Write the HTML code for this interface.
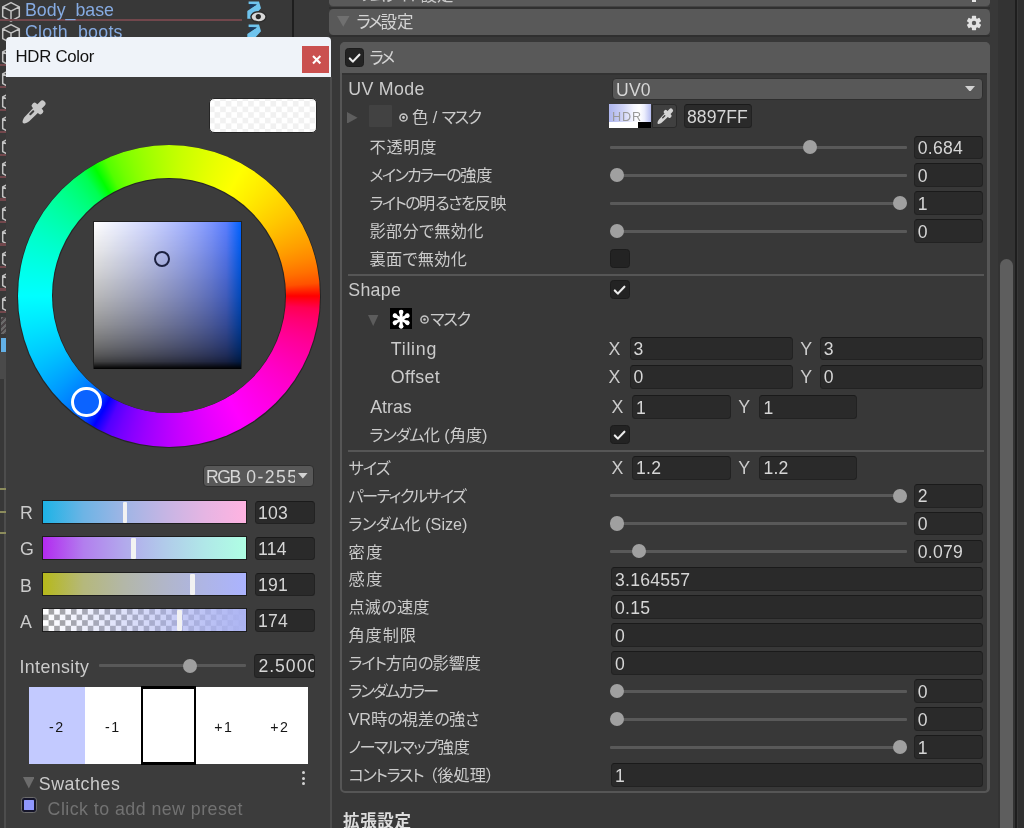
<!DOCTYPE html>
<html lang="ja"><head><meta charset="utf-8"><title>HDR Color</title>
<style>
html,body{margin:0;padding:0;}
body{width:1024px;height:828px;overflow:hidden;background:#383838;position:relative;
 font-family:"Liberation Sans","Noto Sans CJK JP",sans-serif;font-size:17px;color:#d0d0d0;}
#root{position:absolute;left:0;top:0;width:1024px;height:828px;overflow:hidden;background:#383838;will-change:transform;}
#root div,#root span,#root svg.a{position:absolute;box-sizing:border-box;}
.t{white-space:nowrap;display:block;}
#root .t span{position:static;}
.lb{color:#cbcbcb;font-size:17.8px;}
.jp{color:#cbcbcb;font-size:16.2px;font-feature-settings:"palt";}
.v{color:#d6d6d6;font-size:17.6px;margin-top:0.6px;letter-spacing:0.25px;}
.f{background:#2a2a2a;border:1px solid #222;border-top-color:#1a1a1a;border-radius:3.5px;}
.trk{background:#595959;border-radius:1px;}
.knob{background:#a0a0a0;border-radius:50%;}
.cb{background:#232323;border:1px solid #1c1c1c;border-radius:3.5px;}
.hd{background:#595959;border-radius:4.5px;}
.sep{background:#565656;}
.dd{background:#585858;border:1px solid #2e2e2e;border-radius:4px;}
.bar{border:1.5px solid #1d1d1d;}
.h{background:#f2f2f2;border-radius:1px;}
</style></head><body><div id="root">

<svg class="a" style="left:0.5px;top:1.0px" width="20" height="21" viewBox="0 0 20 21"><path d="M10 1.6 L18.3 5.8 V15.6 L10 20 L1.7 15.6 V5.8 Z M1.7 5.8 L10 10.2 L18.3 5.8 M10 10.2 V20" fill="none" stroke="#c4c4c4" stroke-width="1.5" stroke-linejoin="round"/></svg>
<div class="" style="left:0px;top:18.8px;width:241.5px;height:2.4px;background:#72474c;"></div>
<svg class="a" style="left:0.5px;top:23.4px" width="20" height="21" viewBox="0 0 20 21"><path d="M10 1.6 L18.3 5.8 V15.6 L10 20 L1.7 15.6 V5.8 Z M1.7 5.8 L10 10.2 L18.3 5.8 M10 10.2 V20" fill="none" stroke="#c4c4c4" stroke-width="1.5" stroke-linejoin="round"/></svg>
<svg class="a" style="left:0.5px;top:45.9px" width="20" height="21" viewBox="0 0 20 21"><path d="M10 1.6 L18.3 5.8 V15.6 L10 20 L1.7 15.6 V5.8 Z M1.7 5.8 L10 10.2 L18.3 5.8 M10 10.2 V20" fill="none" stroke="#c4c4c4" stroke-width="1.5" stroke-linejoin="round"/></svg>
<div class="" style="left:0px;top:63.7px;width:241.5px;height:2.4px;background:#72474c;"></div>
<svg class="a" style="left:0.5px;top:68.3px" width="20" height="21" viewBox="0 0 20 21"><path d="M10 1.6 L18.3 5.8 V15.6 L10 20 L1.7 15.6 V5.8 Z M1.7 5.8 L10 10.2 L18.3 5.8 M10 10.2 V20" fill="none" stroke="#c4c4c4" stroke-width="1.5" stroke-linejoin="round"/></svg>
<div class="" style="left:0px;top:86.1px;width:241.5px;height:2.4px;background:#72474c;"></div>
<svg class="a" style="left:0.5px;top:90.8px" width="20" height="21" viewBox="0 0 20 21"><path d="M10 1.6 L18.3 5.8 V15.6 L10 20 L1.7 15.6 V5.8 Z M1.7 5.8 L10 10.2 L18.3 5.8 M10 10.2 V20" fill="none" stroke="#c4c4c4" stroke-width="1.5" stroke-linejoin="round"/></svg>
<div class="" style="left:0px;top:108.6px;width:241.5px;height:2.4px;background:#72474c;"></div>
<svg class="a" style="left:0.5px;top:113.2px" width="20" height="21" viewBox="0 0 20 21"><path d="M10 1.6 L18.3 5.8 V15.6 L10 20 L1.7 15.6 V5.8 Z M1.7 5.8 L10 10.2 L18.3 5.8 M10 10.2 V20" fill="none" stroke="#c4c4c4" stroke-width="1.5" stroke-linejoin="round"/></svg>
<div class="" style="left:0px;top:131.1px;width:241.5px;height:2.3px;background:#72474c;"></div>
<svg class="a" style="left:0.5px;top:135.7px" width="20" height="21" viewBox="0 0 20 21"><path d="M10 1.6 L18.3 5.8 V15.6 L10 20 L1.7 15.6 V5.8 Z M1.7 5.8 L10 10.2 L18.3 5.8 M10 10.2 V20" fill="none" stroke="#c4c4c4" stroke-width="1.5" stroke-linejoin="round"/></svg>
<div class="" style="left:0px;top:153.5px;width:241.5px;height:2.4px;background:#72474c;"></div>
<svg class="a" style="left:0.5px;top:158.2px" width="20" height="21" viewBox="0 0 20 21"><path d="M10 1.6 L18.3 5.8 V15.6 L10 20 L1.7 15.6 V5.8 Z M1.7 5.8 L10 10.2 L18.3 5.8 M10 10.2 V20" fill="none" stroke="#c4c4c4" stroke-width="1.5" stroke-linejoin="round"/></svg>
<div class="" style="left:0px;top:176.0px;width:241.5px;height:2.3px;background:#72474c;"></div>
<svg class="a" style="left:0.5px;top:180.6px" width="20" height="21" viewBox="0 0 20 21"><path d="M10 1.6 L18.3 5.8 V15.6 L10 20 L1.7 15.6 V5.8 Z M1.7 5.8 L10 10.2 L18.3 5.8 M10 10.2 V20" fill="none" stroke="#c4c4c4" stroke-width="1.5" stroke-linejoin="round"/></svg>
<div class="" style="left:0px;top:198.4px;width:241.5px;height:2.4px;background:#72474c;"></div>
<svg class="a" style="left:0.5px;top:203.0px" width="20" height="21" viewBox="0 0 20 21"><path d="M10 1.6 L18.3 5.8 V15.6 L10 20 L1.7 15.6 V5.8 Z M1.7 5.8 L10 10.2 L18.3 5.8 M10 10.2 V20" fill="none" stroke="#c4c4c4" stroke-width="1.5" stroke-linejoin="round"/></svg>
<div class="" style="left:0px;top:220.8px;width:241.5px;height:2.4px;background:#72474c;"></div>
<svg class="a" style="left:0.5px;top:225.5px" width="20" height="21" viewBox="0 0 20 21"><path d="M10 1.6 L18.3 5.8 V15.6 L10 20 L1.7 15.6 V5.8 Z M1.7 5.8 L10 10.2 L18.3 5.8 M10 10.2 V20" fill="none" stroke="#c4c4c4" stroke-width="1.5" stroke-linejoin="round"/></svg>
<div class="" style="left:0px;top:243.3px;width:241.5px;height:2.4px;background:#72474c;"></div>
<svg class="a" style="left:0.5px;top:247.9px" width="20" height="21" viewBox="0 0 20 21"><path d="M10 1.6 L18.3 5.8 V15.6 L10 20 L1.7 15.6 V5.8 Z M1.7 5.8 L10 10.2 L18.3 5.8 M10 10.2 V20" fill="none" stroke="#c4c4c4" stroke-width="1.5" stroke-linejoin="round"/></svg>
<div class="" style="left:0px;top:265.8px;width:241.5px;height:2.3px;background:#72474c;"></div>
<svg class="a" style="left:0.5px;top:270.4px" width="20" height="21" viewBox="0 0 20 21"><path d="M10 1.6 L18.3 5.8 V15.6 L10 20 L1.7 15.6 V5.8 Z M1.7 5.8 L10 10.2 L18.3 5.8 M10 10.2 V20" fill="none" stroke="#c4c4c4" stroke-width="1.5" stroke-linejoin="round"/></svg>
<div class="" style="left:0px;top:288.2px;width:241.5px;height:2.4px;background:#72474c;"></div>
<svg class="a" style="left:0.5px;top:292.8px" width="20" height="21" viewBox="0 0 20 21"><path d="M10 1.6 L18.3 5.8 V15.6 L10 20 L1.7 15.6 V5.8 Z M1.7 5.8 L10 10.2 L18.3 5.8 M10 10.2 V20" fill="none" stroke="#c4c4c4" stroke-width="1.5" stroke-linejoin="round"/></svg>
<div class="" style="left:0px;top:310.6px;width:241.5px;height:2.4px;background:#72474c;"></div>
<span id="t1" class="t lb" style="left:25px;top:-4.4px;height:28px;line-height:28px;color:#86abe2;">Body_base</span>
<span id="t2" class="t lb" style="left:25px;top:18.1px;height:28px;line-height:28px;letter-spacing:0.26px;color:#86abe2;">Cloth_boots</span>
<svg class="a" style="left:232px;top:0px" width="32" height="20" viewBox="0 0 32 20"><path d="M16.6 1.4 H27 L29 8.2 L19.5 18.7 H15.3 V11 L24.6 4.6 L16.6 4 Z" fill="#6fc4ee"/><path d="M17.9 3.9 L25 4.5 L17.9 8.6 Z" fill="#173a63"/></svg>
<svg class="a" style="left:232px;top:22.5px" width="32" height="20" viewBox="0 0 32 20"><path d="M16.6 1.4 H27 L29 8.2 L19.5 18.7 H15.3 V11 L24.6 4.6 L16.6 4 Z" fill="#6fc4ee"/><path d="M17.9 3.9 L25 4.5 L17.9 8.6 Z" fill="#173a63"/></svg>
<svg class="a" style="left:249px;top:10px" width="19" height="14" viewBox="0 0 19 14"><ellipse cx="9.5" cy="6.8" rx="8.3" ry="5.8" fill="#2c2c2c"/><ellipse cx="9.5" cy="6.8" rx="6.8" ry="4.4" fill="#d8d8d8"/><circle cx="9.3" cy="6.6" r="2.6" fill="#2a2a2a"/></svg>
<div class="" style="left:1px;top:317px;width:4.5px;height:17.0px;background:repeating-linear-gradient(135deg,#6a6a6a 0 2px,#4a4446 2px 4px);"></div>
<div class="" style="left:0.5px;top:338px;width:5.5px;height:14.0px;background:#62b0e6;"></div>
<div class="" style="left:0px;top:352px;width:6.0px;height:27.0px;background:#4a4a4a;"></div>
<div class="" style="left:4px;top:379px;width:1.5px;height:449.0px;background:#4d4d4d;"></div>
<div class="" style="left:0px;top:487.6px;width:5.5px;height:2.0px;background:#8c8c5c;"></div>
<div class="" style="left:0px;top:510.6px;width:5.5px;height:2.0px;background:#8c8c5c;"></div>
<div class="" style="left:0px;top:532.3px;width:5.5px;height:2.0px;background:#8c8c5c;"></div>
<div class="" style="left:292px;top:0px;width:2.3px;height:828.0px;background:#1e1e1e;"></div>
<div class="" style="left:997.7px;top:0px;width:17.6px;height:828.0px;background:#333;"></div>
<div class="" style="left:1015.3px;top:0px;width:2.2px;height:828.0px;background:#1e1e1e;"></div>
<div class="" style="left:1017.5px;top:0px;width:6.5px;height:828.0px;background:#2f2f2f;"></div>
<div class="" style="left:1000px;top:259.2px;width:13.0px;height:590.8px;background:#5e5e5e;border-radius:6.5px;"></div>
<div class="hd" style="left:329px;top:-20px;width:660.5px;height:27.2px;border-bottom:1px solid #444;"></div>
<span id="t3" class="t jp" style="left:358px;top:-18.9px;height:28px;line-height:28px;font-size:16.5px;"><span class="k" style="letter-spacing:-1.43px">リムライト</span>設定</span>
<div class="" style="left:972px;top:-2px;width:4.0px;height:4.4px;background:#e6e6e6;"></div>
<div class="" style="left:329px;top:7.2px;width:660.5px;height:1.8px;background:#303030;"></div>
<div class="hd" style="left:329px;top:9px;width:660.5px;height:26.0px;"></div>
<div class="" style="left:329px;top:35px;width:660.5px;height:2.0px;background:#2f2f2f;border-radius:0 0 3px 3px;"></div>
<svg class="a" style="left:337px;top:16.3px" width="12.5" height="10.7" viewBox="0 0 12.5 10.7"><path d="M0 0 H12.5 L6.25 10.7 Z" fill="#707070"/></svg>
<span id="t4" class="t jp" style="left:356.5px;top:7.6px;height:28px;line-height:28px;font-size:16.5px;color:#d4d4d4;"><span class="k" style="letter-spacing:-2.10px">ラメ</span>設定</span>
<svg class="a" style="left:965.8px;top:14.9px" width="16" height="16" viewBox="-8 -8 16 16"><g fill="#e2e2e2"><rect x="-2.1" y="-7.2" width="4.2" height="4" rx="0.6" transform="rotate(0)" /><rect x="-2.1" y="-7.2" width="4.2" height="4" rx="0.6" transform="rotate(60)" /><rect x="-2.1" y="-7.2" width="4.2" height="4" rx="0.6" transform="rotate(120)" /><rect x="-2.1" y="-7.2" width="4.2" height="4" rx="0.6" transform="rotate(180)" /><rect x="-2.1" y="-7.2" width="4.2" height="4" rx="0.6" transform="rotate(240)" /><rect x="-2.1" y="-7.2" width="4.2" height="4" rx="0.6" transform="rotate(300)" /><circle r="5.3"/></g><circle r="2.2" fill="#595959"/></svg>
<div class="" style="left:340px;top:42px;width:649.7px;height:750.7px;border:2px solid #565656;border-right-width:3px;border-radius:5px;background:#383838;"></div>
<div class="" style="left:342px;top:73px;width:644.7px;height:2.4px;background:#323232;"></div>
<div class="" style="left:340px;top:42px;width:649.7px;height:31.2px;background:#595959;border-radius:5px 5px 0 0;"></div>
<div class="cb" style="left:344.7px;top:47.9px;width:19.3px;height:19.3px;"><svg width="100%" height="100%" viewBox="0 0 20 20"><path d="M4.4 10.9 L7.9 14.6 L15.5 6.6" fill="none" stroke="#ececec" stroke-width="2.5" stroke-linecap="round" stroke-linejoin="round"/></svg></div>
<span id="t5" class="t jp" style="left:369.5px;top:43.8px;height:28px;line-height:28px;font-size:16.5px;color:#d4d4d4;"><span class="k" style="letter-spacing:-2.60px">ラメ</span></span>
<span id="t6" class="t lb" style="left:348.3px;top:74.9px;height:28px;line-height:28px;letter-spacing:0.31px;">UV Mode</span>
<div class="dd" style="left:612px;top:78px;width:371.0px;height:21.6px;"></div>
<span id="t7" class="t v" style="left:616px;top:75.0px;height:28px;line-height:28px;letter-spacing:0.20px;">UV0</span>
<svg class="a" style="left:964.5px;top:85.6px" width="10" height="5.8" viewBox="0 0 10 5.8"><path d="M0 0 H10 L5 5.8 Z" fill="#d2d2d2"/></svg>
<svg class="a" style="left:347px;top:111.8px" width="10.6" height="11.6" viewBox="0 0 10.6 11.6"><path d="M0 0 V11.6 L10.6 5.8 Z" fill="#5e5e5e"/></svg>
<div class="" style="left:369px;top:104.8px;width:22.6px;height:22.6px;background:#424242;border-radius:1px;"></div>
<svg class="a" style="left:399px;top:112.5px" width="9" height="9" viewBox="0 0 9 9"><circle cx="4.5" cy="4.5" r="3.6" fill="none" stroke="#c8c8c8" stroke-width="1.5"/><circle cx="4.5" cy="4.5" r="1.4" fill="#c8c8c8"/></svg>
<span id="t8" class="t jp" style="left:412px;top:103.2px;height:28px;line-height:28px;">色 / <span class="k" style="letter-spacing:-1.59px">マスク</span></span>
<div class="" style="left:608.6px;top:104.4px;width:42.2px;height:23.6px;background:linear-gradient(to right,#aeb6ee 0,#b9c0f1 12%,#d2d6f8 35%,#f4f5ff 58%,#ffffff 72%,#eceefd 84%,#b4bbf0 100%);"></div>
<div class="" style="left:608.6px;top:122.3px;width:29.4px;height:5.7px;background:#fff;"></div>
<div class="" style="left:638px;top:122.3px;width:12.8px;height:5.7px;background:#000;"></div>
<span id="t9" class="t v" style="left:612px;top:102.8px;height:28px;line-height:28px;letter-spacing:0.85px;color:#9a9a9a;font-size:12.6px;">HDR</span>
<div class="" style="left:651.6px;top:104.4px;width:25.0px;height:23.6px;background:#404040;border:1px solid #2a2a2a;border-radius:0 3px 3px 0;"></div>
<svg class="a" style="left:652.8px;top:104.2px" width="24.5" height="24.5" viewBox="-18 -18 36 36"><g transform="rotate(45)"><g fill="#d4d4d4"><rect x="-3.1" y="-14.9" width="6.2" height="11" rx="3"/><rect x="-6.8" y="-7.7" width="13.6" height="5.6" rx="2.2"/><path d="M-3.5 -3 H3.5 L3.1 9.5 C3 12.4 1.5 15.6 0 15.6 C-1.5 15.6 -3 12.4 -3.1 9.5 Z"/></g><rect x="-2.1" y="-1" width="2.1" height="6.2" rx="1" fill="#404040"/></g></svg>
<div class="f" style="left:683.5px;top:104.4px;width:68.3px;height:23.6px;"></div>
<span id="t10" class="t v" style="left:687px;top:102.4px;height:28px;line-height:28px;letter-spacing:0.04px;">8897FF</span>
<span id="t11" class="t jp" style="left:369.5px;top:133.4px;height:28px;line-height:28px;letter-spacing:0.75px;">不透明度</span>
<div class="trk" style="left:610px;top:146px;width:296.7px;height:3.0px;"></div>
<div class="knob" style="left:803.3px;top:140.20000000000002px;width:14.2px;height:14.2px;"></div>
<div class="f" style="left:913.8px;top:135.5px;width:69.0px;height:23.8px;"></div>
<span id="t12" class="t v" style="left:917.8px;top:133.4px;height:28px;line-height:28px;">0.684</span>
<span id="t13" class="t jp" style="left:369.5px;top:161.2px;height:28px;line-height:28px;"><span class="k" style="letter-spacing:-1.81px">メインカラーの</span>強度</span>
<div class="trk" style="left:610px;top:174px;width:296.7px;height:3.0px;"></div>
<div class="knob" style="left:610.3px;top:168.0px;width:14.2px;height:14.2px;"></div>
<div class="f" style="left:913.8px;top:163.29999999999998px;width:69.0px;height:23.8px;"></div>
<span id="t14" class="t v" style="left:917.8px;top:161.2px;height:28px;line-height:28px;">0</span>
<span id="t15" class="t jp" style="left:369.5px;top:189.1px;height:28px;line-height:28px;"><span class="k" style="letter-spacing:-1.68px">ライトの</span>明<span class="k" style="letter-spacing:-1.68px">るさを</span>反映</span>
<div class="trk" style="left:610px;top:202px;width:296.7px;height:3.0px;"></div>
<div class="knob" style="left:892.6px;top:195.9px;width:14.2px;height:14.2px;"></div>
<div class="f" style="left:913.8px;top:191.2px;width:69.0px;height:23.8px;"></div>
<span id="t16" class="t v" style="left:917.8px;top:189.1px;height:28px;line-height:28px;">1</span>
<span id="t17" class="t jp" style="left:369.5px;top:217.0px;height:28px;line-height:28px;letter-spacing:0.32px;">影部分で無効化</span>
<div class="trk" style="left:610px;top:230px;width:296.7px;height:3.0px;"></div>
<div class="knob" style="left:610.3px;top:223.8px;width:14.2px;height:14.2px;"></div>
<div class="f" style="left:913.8px;top:219.1px;width:69.0px;height:23.8px;"></div>
<span id="t18" class="t v" style="left:917.8px;top:217.0px;height:28px;line-height:28px;">0</span>
<span id="t19" class="t jp" style="left:369.5px;top:244.9px;height:28px;line-height:28px;letter-spacing:0.32px;">裏面で無効化</span>
<div class="cb" style="left:610.4px;top:249.0px;width:19.3px;height:19.3px;"></div>
<div class="sep" style="left:347.5px;top:274.2px;width:636.5px;height:1.9px;"></div>
<span id="t20" class="t lb" style="left:348.3px;top:276.2px;height:28px;line-height:28px;letter-spacing:0.27px;">Shape</span>
<div class="cb" style="left:610.4px;top:280.0px;width:19.3px;height:19.3px;"><svg width="100%" height="100%" viewBox="0 0 20 20"><path d="M4.4 10.9 L7.9 14.6 L15.5 6.6" fill="none" stroke="#ececec" stroke-width="2.5" stroke-linecap="round" stroke-linejoin="round"/></svg></div>
<svg class="a" style="left:368.2px;top:314.7px" width="10.4" height="11" viewBox="0 0 10.4 11"><path d="M0 0 H10.4 L5.2 11 Z" fill="#5c5c5c"/></svg>
<svg class="a" style="left:389.9px;top:307.6px" width="22.3" height="21.8" viewBox="-11.15 -10.9 22.3 21.8"><rect x="-11.15" y="-10.9" width="22.3" height="21.8" fill="#000"/><g transform="translate(0,0.3)"><g transform="rotate(0)"><line x1="0" y1="0" x2="0" y2="-7.6" stroke="#fff" stroke-width="3" stroke-linecap="round"/><circle cx="0" cy="-7.1" r="2.35" fill="#fff"/></g><g transform="rotate(60)"><line x1="0" y1="0" x2="0" y2="-7.6" stroke="#fff" stroke-width="3" stroke-linecap="round"/><circle cx="0" cy="-7.1" r="2.35" fill="#fff"/></g><g transform="rotate(120)"><line x1="0" y1="0" x2="0" y2="-7.6" stroke="#fff" stroke-width="3" stroke-linecap="round"/><circle cx="0" cy="-7.1" r="2.35" fill="#fff"/></g><g transform="rotate(180)"><line x1="0" y1="0" x2="0" y2="-7.6" stroke="#fff" stroke-width="3" stroke-linecap="round"/><circle cx="0" cy="-7.1" r="2.35" fill="#fff"/></g><g transform="rotate(240)"><line x1="0" y1="0" x2="0" y2="-7.6" stroke="#fff" stroke-width="3" stroke-linecap="round"/><circle cx="0" cy="-7.1" r="2.35" fill="#fff"/></g><g transform="rotate(300)"><line x1="0" y1="0" x2="0" y2="-7.6" stroke="#fff" stroke-width="3" stroke-linecap="round"/><circle cx="0" cy="-7.1" r="2.35" fill="#fff"/></g></g></svg>
<svg class="a" style="left:420px;top:314.5px" width="9" height="9" viewBox="0 0 9 9"><circle cx="4.5" cy="4.5" r="3.6" fill="none" stroke="#c4c4c4" stroke-width="1.5"/><circle cx="4.5" cy="4.5" r="1.3" fill="#c4c4c4"/></svg>
<span id="t21" class="t jp" style="left:430.2px;top:305.3px;height:28px;line-height:28px;"><span class="k" style="letter-spacing:-1.36px">マスク</span></span>
<span id="t22" class="t lb" style="left:390.8px;top:334.5px;height:28px;line-height:28px;letter-spacing:0.73px;">Tiling</span>
<span id="t23" class="t lb" style="left:608.5px;top:334.5px;height:28px;line-height:28px;">X</span>
<div class="f" style="left:629.5px;top:336.6px;width:163.0px;height:23.8px;"></div>
<span id="t24" class="t v" style="left:633.5px;top:334.5px;height:28px;line-height:28px;">3</span>
<span id="t25" class="t lb" style="left:800.3px;top:334.5px;height:28px;line-height:28px;">Y</span>
<div class="f" style="left:819.8px;top:336.6px;width:162.8px;height:23.8px;"></div>
<span id="t26" class="t v" style="left:823.8px;top:334.5px;height:28px;line-height:28px;">3</span>
<span id="t27" class="t lb" style="left:390.8px;top:362.8px;height:28px;line-height:28px;letter-spacing:0.38px;">Offset</span>
<span id="t28" class="t lb" style="left:608.5px;top:362.8px;height:28px;line-height:28px;">X</span>
<div class="f" style="left:629.5px;top:364.90000000000003px;width:163.0px;height:23.8px;"></div>
<span id="t29" class="t v" style="left:633.5px;top:362.8px;height:28px;line-height:28px;">0</span>
<span id="t30" class="t lb" style="left:800.3px;top:362.8px;height:28px;line-height:28px;">Y</span>
<div class="f" style="left:819.8px;top:364.90000000000003px;width:162.8px;height:23.8px;"></div>
<span id="t31" class="t v" style="left:823.8px;top:362.8px;height:28px;line-height:28px;">0</span>
<span id="t32" class="t lb" style="left:370.2px;top:393.0px;height:28px;line-height:28px;">Atras</span>
<span id="t33" class="t lb" style="left:611.4px;top:393.0px;height:28px;line-height:28px;">X</span>
<div class="f" style="left:632px;top:395.1px;width:98.5px;height:23.8px;"></div>
<span id="t34" class="t v" style="left:636px;top:393.0px;height:28px;line-height:28px;">1</span>
<span id="t35" class="t lb" style="left:738.3px;top:393.0px;height:28px;line-height:28px;">Y</span>
<div class="f" style="left:759.4px;top:395.1px;width:97.4px;height:23.8px;"></div>
<span id="t36" class="t v" style="left:763.4px;top:393.0px;height:28px;line-height:28px;">1</span>
<span id="t37" class="t jp" style="left:369.5px;top:421.4px;height:28px;line-height:28px;"><span class="k" style="letter-spacing:-1.05px">ランダム</span>化 (角度)</span>
<div class="cb" style="left:610.4px;top:425.2px;width:19.3px;height:19.3px;"><svg width="100%" height="100%" viewBox="0 0 20 20"><path d="M4.4 10.9 L7.9 14.6 L15.5 6.6" fill="none" stroke="#ececec" stroke-width="2.5" stroke-linecap="round" stroke-linejoin="round"/></svg></div>
<div class="sep" style="left:347.5px;top:450.4px;width:636.5px;height:2.0px;"></div>
<span id="t38" class="t jp" style="left:348.5px;top:453.7px;height:28px;line-height:28px;"><span class="k" style="letter-spacing:-0.84px">サイズ</span></span>
<span id="t39" class="t lb" style="left:611.4px;top:453.7px;height:28px;line-height:28px;">X</span>
<div class="f" style="left:632px;top:455.8px;width:98.5px;height:23.8px;"></div>
<span id="t40" class="t v" style="left:636px;top:453.7px;height:28px;line-height:28px;">1.2</span>
<span id="t41" class="t lb" style="left:738.3px;top:453.7px;height:28px;line-height:28px;">Y</span>
<div class="f" style="left:759.4px;top:455.8px;width:97.4px;height:23.8px;"></div>
<span id="t42" class="t v" style="left:763.4px;top:453.7px;height:28px;line-height:28px;">1.2</span>
<span id="t43" class="t jp" style="left:348.5px;top:481.7px;height:28px;line-height:28px;"><span class="k" style="letter-spacing:-1.51px">パーティクルサイズ</span></span>
<div class="trk" style="left:610px;top:494px;width:296.7px;height:3.0px;"></div>
<div class="knob" style="left:892.6px;top:488.5px;width:14.2px;height:14.2px;"></div>
<div class="f" style="left:913.8px;top:483.8px;width:69.0px;height:23.8px;"></div>
<span id="t44" class="t v" style="left:917.8px;top:481.7px;height:28px;line-height:28px;">2</span>
<span id="t45" class="t jp" style="left:348.5px;top:509.6px;height:28px;line-height:28px;"><span class="k" style="letter-spacing:-0.58px">ランダム</span>化 (Size)</span>
<div class="trk" style="left:610px;top:522px;width:296.7px;height:3.0px;"></div>
<div class="knob" style="left:610.3px;top:516.4px;width:14.2px;height:14.2px;"></div>
<div class="f" style="left:913.8px;top:511.70000000000005px;width:69.0px;height:23.8px;"></div>
<span id="t46" class="t v" style="left:917.8px;top:509.6px;height:28px;line-height:28px;">0</span>
<span id="t47" class="t jp" style="left:348.5px;top:537.5px;height:28px;line-height:28px;letter-spacing:1.62px;">密度</span>
<div class="trk" style="left:610px;top:550px;width:296.7px;height:3.0px;"></div>
<div class="knob" style="left:631.6999999999999px;top:544.3px;width:14.2px;height:14.2px;"></div>
<div class="f" style="left:913.8px;top:539.6px;width:69.0px;height:23.8px;"></div>
<span id="t48" class="t v" style="left:917.8px;top:537.5px;height:28px;line-height:28px;">0.079</span>
<span id="t49" class="t jp" style="left:348.5px;top:565.3px;height:28px;line-height:28px;letter-spacing:1.62px;">感度</span>
<div class="f" style="left:611px;top:567.4px;width:371.8px;height:23.8px;"></div>
<span id="t50" class="t v" style="left:615px;top:565.3px;height:28px;line-height:28px;">3.164557</span>
<span id="t51" class="t jp" style="left:348.5px;top:593.2px;height:28px;line-height:28px;letter-spacing:0.16px;">点滅の速度</span>
<div class="f" style="left:611px;top:595.3000000000001px;width:371.8px;height:23.8px;"></div>
<span id="t52" class="t v" style="left:615px;top:593.2px;height:28px;line-height:28px;">0.15</span>
<span id="t53" class="t jp" style="left:348.5px;top:621.2px;height:28px;line-height:28px;letter-spacing:0.92px;">角度制限</span>
<div class="f" style="left:611px;top:623.3000000000001px;width:371.8px;height:23.8px;"></div>
<span id="t54" class="t v" style="left:615px;top:621.2px;height:28px;line-height:28px;">0</span>
<span id="t55" class="t jp" style="left:348.5px;top:649.1px;height:28px;line-height:28px;"><span class="k" style="letter-spacing:-1.19px">ライト</span>方向<span class="k" style="letter-spacing:-1.19px">の</span>影響度</span>
<div class="f" style="left:611px;top:651.2px;width:371.8px;height:23.8px;"></div>
<span id="t56" class="t v" style="left:615px;top:649.1px;height:28px;line-height:28px;">0</span>
<span id="t57" class="t jp" style="left:348.5px;top:677.0px;height:28px;line-height:28px;"><span class="k" style="letter-spacing:-2.11px">ランダムカラー</span></span>
<div class="trk" style="left:610px;top:690px;width:296.7px;height:3.0px;"></div>
<div class="knob" style="left:610.3px;top:683.8px;width:14.2px;height:14.2px;"></div>
<div class="f" style="left:913.8px;top:679.1px;width:69.0px;height:23.8px;"></div>
<span id="t58" class="t v" style="left:917.8px;top:677.0px;height:28px;line-height:28px;">0</span>
<span id="t59" class="t jp" style="left:348.5px;top:705.0px;height:28px;line-height:28px;">VR時<span class="k" style="letter-spacing:-0.96px">の</span>視差<span class="k" style="letter-spacing:-0.96px">の</span>強<span class="k" style="letter-spacing:-0.96px">さ</span></span>
<div class="trk" style="left:610px;top:718px;width:296.7px;height:3.0px;"></div>
<div class="knob" style="left:610.3px;top:711.8px;width:14.2px;height:14.2px;"></div>
<div class="f" style="left:913.8px;top:707.1px;width:69.0px;height:23.8px;"></div>
<span id="t60" class="t v" style="left:917.8px;top:705.0px;height:28px;line-height:28px;">0</span>
<span id="t61" class="t jp" style="left:348.5px;top:733.0px;height:28px;line-height:28px;"><span class="k" style="letter-spacing:-1.62px">ノーマルマップ</span>強度</span>
<div class="trk" style="left:610px;top:746px;width:296.7px;height:3.0px;"></div>
<div class="knob" style="left:892.6px;top:739.8px;width:14.2px;height:14.2px;"></div>
<div class="f" style="left:913.8px;top:735.1px;width:69.0px;height:23.8px;"></div>
<span id="t62" class="t v" style="left:917.8px;top:733.0px;height:28px;line-height:28px;">1</span>
<span id="t63" class="t jp" style="left:348.5px;top:761.0px;height:28px;line-height:28px;"><span class="k" style="letter-spacing:-1.36px">コントラスト</span><span style="margin-left:6px">（</span>後処理）</span>
<div class="f" style="left:611px;top:763.1px;width:371.8px;height:23.8px;"></div>
<span id="t64" class="t v" style="left:615px;top:761.0px;height:28px;line-height:28px;">1</span>
<span id="t65" class="t jp" style="left:343px;top:806.6px;height:28px;line-height:28px;letter-spacing:0.67px;font-weight:bold;color:#dcdcdc;font-size:16.5px;">拡張設定</span>
<div class="" style="left:6px;top:37px;width:324.6px;height:803.0px;background:#3c3c3c;border-radius:4px 4px 0 0;"></div>
<div class="" style="left:329.9px;top:77px;width:2.5px;height:751.0px;background:#4d4d4d;"></div>
<div class="" style="left:6px;top:37px;width:325.0px;height:39.8px;background:#eff3f9;border-radius:4px 4px 0 0;"></div>
<span id="t66" class="t lb" style="left:15.5px;top:42.7px;height:28px;line-height:28px;letter-spacing:-0.27px;color:#111;font-size:16.8px;">HDR Color</span>
<div class="" style="left:302.3px;top:46px;width:27.1px;height:27.0px;background:#ca504f;"></div>
<svg class="a" style="left:311.6px;top:55.4px" width="9.4" height="9.4" viewBox="0 0 9.4 9.4"><path d="M1 1 L8.4 8.4 M8.4 1 L1 8.4" stroke="#fff" stroke-width="2.1"/></svg>
<svg class="a" style="left:15.5px;top:94.3px" width="36.0" height="36.0" viewBox="-18 -18 36 36"><g transform="rotate(45)"><g fill="#c8c8c8"><rect x="-3.1" y="-14.9" width="6.2" height="11" rx="3"/><rect x="-6.8" y="-7.7" width="13.6" height="5.6" rx="2.2"/><path d="M-3.5 -3 H3.5 L3.1 9.5 C3 12.4 1.5 15.6 0 15.6 C-1.5 15.6 -3 12.4 -3.1 9.5 Z"/></g><rect x="-2.1" y="-1" width="2.1" height="6.2" rx="1" fill="#3c3c3c"/></g></svg>
<div class="" style="left:208.9px;top:97.5px;width:108.2px;height:35.2px;border:1px solid #262626;border-radius:5px;background-color:#fff;background-image:conic-gradient(#f1f1f1 25%,#fff 0 50%,#f1f1f1 0 75%,#fff 0);background-size:11.2px 11.2px;background-position:-1px 2px;"></div>
<div class="" style="left:16.8px;top:144.6px;width:303.8px;height:303.4px;border-radius:50%;background:#262626;"></div>
<div class="" style="left:17.6px;top:145.4px;width:302.2px;height:301.8px;border-radius:50%;background:conic-gradient(from 90deg, rgb(255,0,0) 0deg, rgb(255,0,82) 5deg, rgb(255,0,113) 10deg, rgb(255,0,136) 15deg, rgb(255,0,155) 20deg, rgb(255,0,171) 25deg, rgb(255,0,186) 30deg, rgb(255,0,200) 35deg, rgb(255,0,212) 40deg, rgb(255,0,224) 45deg, rgb(255,0,235) 50deg, rgb(255,0,245) 55deg, rgb(255,0,255) 60deg, rgb(245,0,255) 65deg, rgb(235,0,255) 70deg, rgb(224,0,255) 75deg, rgb(212,0,255) 80deg, rgb(200,0,255) 85deg, rgb(186,0,255) 90deg, rgb(171,0,255) 95deg, rgb(155,0,255) 100deg, rgb(136,0,255) 105deg, rgb(113,0,255) 110deg, rgb(82,0,255) 115deg, rgb(0,0,255) 120deg, rgb(0,82,255) 125deg, rgb(0,113,255) 130deg, rgb(0,136,255) 135deg, rgb(0,155,255) 140deg, rgb(0,171,255) 145deg, rgb(0,186,255) 150deg, rgb(0,200,255) 155deg, rgb(0,212,255) 160deg, rgb(0,224,255) 165deg, rgb(0,235,255) 170deg, rgb(0,245,255) 175deg, rgb(0,255,255) 180deg, rgb(0,255,245) 185deg, rgb(0,255,235) 190deg, rgb(0,255,224) 195deg, rgb(0,255,212) 200deg, rgb(0,255,200) 205deg, rgb(0,255,186) 210deg, rgb(0,255,171) 215deg, rgb(0,255,155) 220deg, rgb(0,255,136) 225deg, rgb(0,255,113) 230deg, rgb(0,255,82) 235deg, rgb(0,255,0) 240deg, rgb(82,255,0) 245deg, rgb(113,255,0) 250deg, rgb(136,255,0) 255deg, rgb(155,255,0) 260deg, rgb(171,255,0) 265deg, rgb(186,255,0) 270deg, rgb(200,255,0) 275deg, rgb(212,255,0) 280deg, rgb(224,255,0) 285deg, rgb(235,255,0) 290deg, rgb(245,255,0) 295deg, rgb(255,255,0) 300deg, rgb(255,245,0) 305deg, rgb(255,235,0) 310deg, rgb(255,224,0) 315deg, rgb(255,212,0) 320deg, rgb(255,200,0) 325deg, rgb(255,186,0) 330deg, rgb(255,171,0) 335deg, rgb(255,155,0) 340deg, rgb(255,136,0) 345deg, rgb(255,113,0) 350deg, rgb(255,82,0) 355deg, rgb(255,0,0) 360deg);"></div>
<div class="" style="left:51.8px;top:177.9px;width:233.9px;height:235.6px;border-radius:50%;background:#262626;"></div>
<div class="" style="left:52.699999999999996px;top:178.8px;width:232.1px;height:233.8px;border-radius:50%;background:#3c3c3c;"></div>
<div class="" style="left:92.8px;top:220.8px;width:149.2px;height:148.5px;background:#222;"></div>
<div class="" style="left:93.5px;top:221.5px;width:147.9px;height:147.1px;background:linear-gradient(to bottom, rgba(0,0,0,0.000) 0%, rgba(0,0,0,0.023) 5%, rgba(0,0,0,0.047) 10%, rgba(0,0,0,0.071) 15%, rgba(0,0,0,0.096) 20%, rgba(0,0,0,0.123) 25%, rgba(0,0,0,0.150) 30%, rgba(0,0,0,0.178) 35%, rgba(0,0,0,0.207) 40%, rgba(0,0,0,0.238) 45%, rgba(0,0,0,0.270) 50%, rgba(0,0,0,0.304) 55%, rgba(0,0,0,0.341) 60%, rgba(0,0,0,0.379) 65%, rgba(0,0,0,0.421) 70%, rgba(0,0,0,0.467) 75%, rgba(0,0,0,0.519) 80%, rgba(0,0,0,0.578) 85%, rgba(0,0,0,0.649) 90%, rgba(0,0,0,0.744) 95%, rgba(0,0,0,1.000) 100%),linear-gradient(to right, rgb(255,255,255) 0%, rgb(243,245,255) 10%, rgb(230,234,255) 20%, rgb(217,222,255) 30%, rgb(202,210,255) 40%, rgb(186,196,255) 50%, rgb(168,182,255) 60%, rgb(148,166,255) 70%, rgb(123,148,255) 80%, rgb(90,126,255) 90%, rgb(0,99,255) 100%);"></div>
<div class="" style="left:154.2px;top:251.4px;width:16.0px;height:16.0px;border:2.1px solid #1c2140;border-radius:50%;"></div>
<div class="" style="left:71.2px;top:386.9px;width:30.6px;height:30.6px;border:3.1px solid #fff;border-radius:50%;background:#0b63ff;"></div>
<div class="dd" style="left:202.7px;top:465.2px;width:111.1px;height:21.6px;"></div>
<div class="" style="left:206px;top:466px;width:88.8px;height:20.0px;overflow:hidden;"><span class="t v" id="tdd" style="left:0;top:-4px;height:28px;line-height:28px;"><span style="position:static;letter-spacing:-1.4px">RGB</span><span style="position:static;letter-spacing:1.45px"> 0-255</span></span></div>
<svg class="a" style="left:298.4px;top:473px" width="9.6" height="5.6" viewBox="0 0 9.6 5.6"><path d="M0 0 H9.6 L4.8 5.6 Z" fill="#d2d2d2"/></svg>
<span id="t67" class="t lb" style="left:20px;top:499.3px;height:28px;line-height:28px;">R</span>
<div class="bar" style="left:41.8px;top:499.7px;width:205.2px;height:24.3px;background:linear-gradient(to right,#1db3e6 0%,#6db4e5 20%,#9fb5e5 40%,#c5b5e4 60%,#e6b5e3 80%,#ffb3e1 100%);"></div>
<div class="h" style="left:122.6px;top:501.5px;width:4.8px;height:21.0px;"></div>
<div class="f" style="left:254.9px;top:500.5px;width:59.7px;height:23.0px;"></div>
<span id="t68" class="t v" style="left:258px;top:498.0px;height:28px;line-height:28px;">103</span>
<span id="t69" class="t lb" style="left:20px;top:535.4px;height:28px;line-height:28px;">G</span>
<div class="bar" style="left:41.8px;top:535.8000000000001px;width:205.2px;height:24.3px;background:linear-gradient(to right,#b32af0 0%,#b27eee 20%,#b2a9ec 40%,#b1cbea 60%,#b0e8e8 80%,#afffe4 100%);"></div>
<div class="h" style="left:130.9px;top:537.6px;width:4.8px;height:21.0px;"></div>
<div class="f" style="left:254.9px;top:536.6px;width:59.7px;height:23.0px;"></div>
<span id="t70" class="t v" style="left:258px;top:534.1px;height:28px;line-height:28px;">114</span>
<span id="t71" class="t lb" style="left:20px;top:571.6px;height:28px;line-height:28px;">B</span>
<div class="bar" style="left:41.8px;top:572.0px;width:205.2px;height:24.3px;background:linear-gradient(to right,#b6b91a 0%,#b5b87c 20%,#b3b7a8 40%,#b1b6c9 60%,#aeb5e6 80%,#abb3ff 100%);"></div>
<div class="h" style="left:190.2px;top:573.8px;width:4.8px;height:21.0px;"></div>
<div class="f" style="left:254.9px;top:572.8px;width:59.7px;height:23.0px;"></div>
<span id="t72" class="t v" style="left:258px;top:570.3px;height:28px;line-height:28px;">191</span>
<span id="t73" class="t lb" style="left:20px;top:607.6px;height:28px;line-height:28px;">A</span>
<div class="bar" style="left:41.8px;top:608.0px;width:205.2px;height:24.3px;background:linear-gradient(to right,rgba(172,180,242,0) 0%,rgba(172,180,242,0.5) 50%,rgba(172,180,242,1) 100%),conic-gradient(#a4a4a4 25%,#fff 0 50%,#a4a4a4 0 75%,#fff 0) 0px 0px/11.2px 11.2px,#fff;"></div>
<div class="h" style="left:177.4px;top:609.8px;width:4.8px;height:21.0px;"></div>
<div class="f" style="left:254.9px;top:608.8px;width:59.7px;height:23.0px;"></div>
<span id="t74" class="t v" style="left:258px;top:606.3px;height:28px;line-height:28px;">174</span>
<span id="t75" class="t lb" style="left:19.4px;top:652.8px;height:28px;line-height:28px;letter-spacing:0.41px;">Intensity</span>
<div class="trk" style="left:98.8px;top:664px;width:147.2px;height:3.0px;"></div>
<div class="knob" style="left:182.9px;top:658.5999999999999px;width:14.2px;height:14.2px;"></div>
<div class="f" style="left:254px;top:654px;width:61.0px;height:23.6px;overflow:hidden;"><span class="t v" style="left:3.4px;top:-3.2px;height:28px;line-height:28px;letter-spacing:1.0px">2.50000</span></div>
<div class="" style="left:28.8px;top:686.5px;width:55.9px;height:77.7px;background:#c3caff;"></div>
<span id="t76" class="t lb" style="left:28.8px;top:712.6px;height:28px;line-height:28px;width:55.9px;text-align:center;color:#161616;font-size:14.2px;letter-spacing:1.5px;">-2</span>
<div class="" style="left:84.7px;top:686.5px;width:56.1px;height:77.7px;background:#fff;"></div>
<span id="t77" class="t lb" style="left:84.7px;top:712.6px;height:28px;line-height:28px;width:56.1px;text-align:center;color:#161616;font-size:14.2px;letter-spacing:1.5px;">-1</span>
<div class="" style="left:140.8px;top:686.5px;width:55.0px;height:77.7px;background:#fff;"></div>
<div class="" style="left:195.8px;top:686.5px;width:56.0px;height:77.7px;background:#fff;"></div>
<span id="t78" class="t lb" style="left:195.8px;top:712.6px;height:28px;line-height:28px;width:56.0px;text-align:center;color:#161616;font-size:14.2px;letter-spacing:1.5px;">+1</span>
<div class="" style="left:251.8px;top:686.5px;width:56.2px;height:77.7px;background:#fff;"></div>
<span id="t79" class="t lb" style="left:251.8px;top:712.6px;height:28px;line-height:28px;width:56.2px;text-align:center;color:#161616;font-size:14.2px;letter-spacing:1.5px;">+2</span>
<div class="" style="left:140.5px;top:686.2px;width:55.8px;height:78.5px;background:#000;"></div>
<div class="" style="left:143px;top:688.7px;width:50.8px;height:73.5px;background:#fff;"></div>
<svg class="a" style="left:22.5px;top:777px" width="11.6" height="11.6" viewBox="0 0 11.6 11.6"><path d="M0 0 H11.6 L5.8 11.6 Z" fill="#6c6c6c"/></svg>
<span id="t80" class="t lb" style="left:38.8px;top:769.6px;height:28px;line-height:28px;letter-spacing:0.56px;">Swatches</span>
<div class="" style="left:301.6px;top:771.2px;width:3.0px;height:3.0px;background:#d4d4d4;border-radius:50%;"></div>
<div class="" style="left:301.6px;top:776.8000000000001px;width:3.0px;height:3.0px;background:#d4d4d4;border-radius:50%;"></div>
<div class="" style="left:301.6px;top:782.4000000000001px;width:3.0px;height:3.0px;background:#d4d4d4;border-radius:50%;"></div>
<div class="" style="left:20.9px;top:796.8px;width:16.6px;height:16.4px;background:#15152a;border:1.4px solid #6c6c6c;border-radius:3.2px;"></div>
<div class="" style="left:24.1px;top:800px;width:9.8px;height:9.6px;background:#8f97ff;border-radius:0.5px;"></div>
<span id="t81" class="t lb" style="left:47.6px;top:795.0px;height:28px;line-height:28px;letter-spacing:0.46px;color:#727272;">Click to add new preset</span>
</div></body></html>
